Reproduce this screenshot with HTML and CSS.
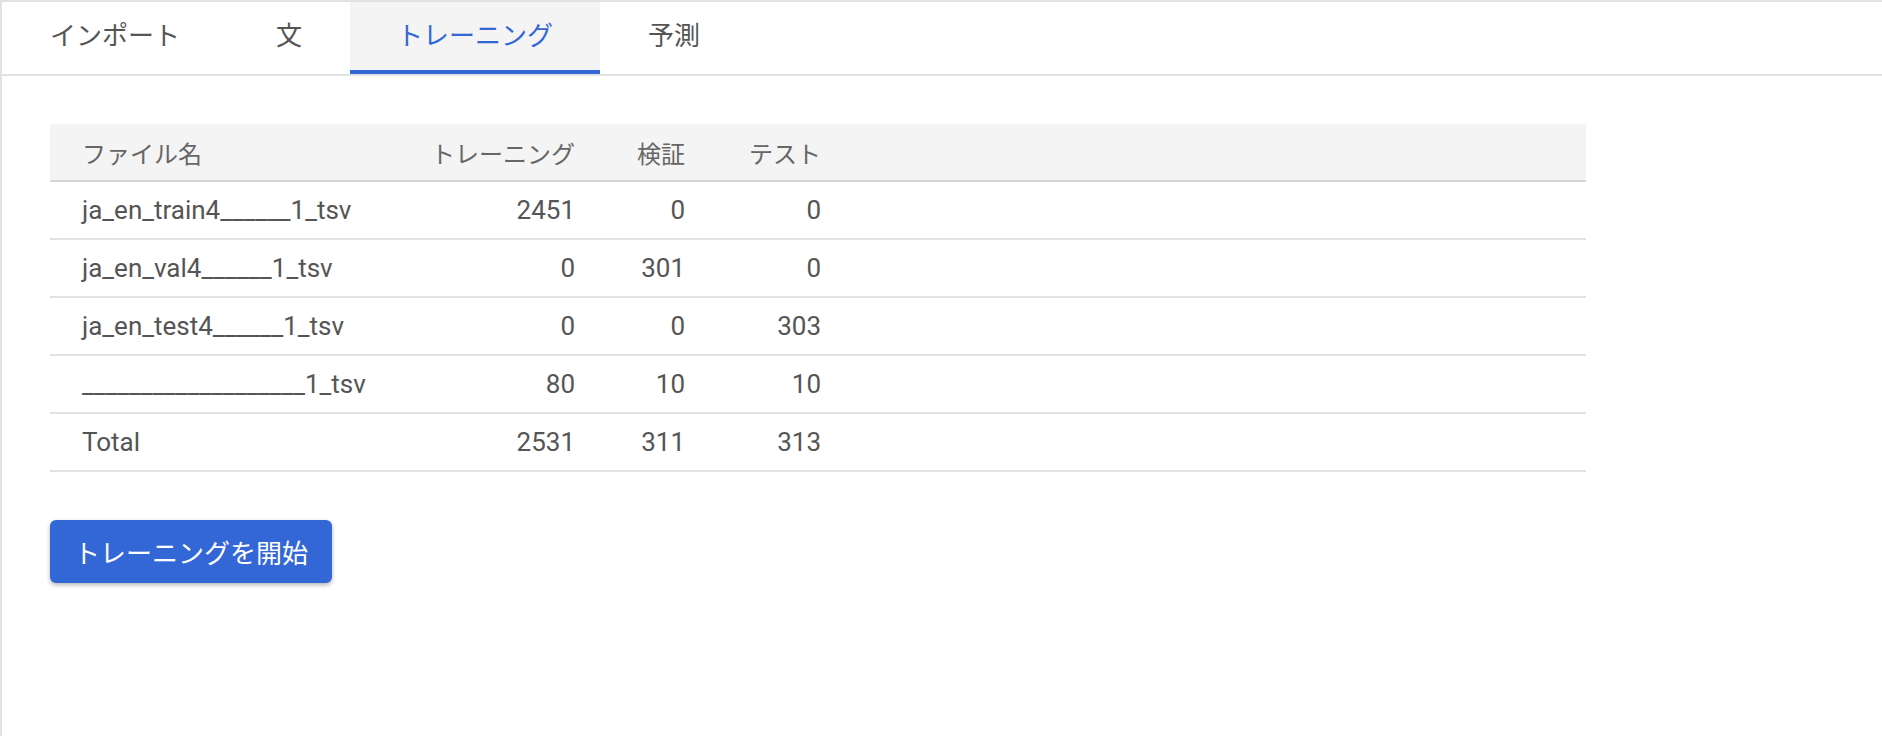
FILE: index.html
```html
<!DOCTYPE html>
<html lang="ja">
<head>
  <meta charset="utf-8"/>
  <meta content="width=device-width, initial-scale=1.0" name="viewport"/>
  <title>トレーニング</title>
  <link rel="stylesheet" href="styles.css">
</head>
<body>

<div class="app">
  <nav class="tabs">
    <a class="tab" href="#">インポート</a>
    <a class="tab" href="#">文</a>
    <a class="tab active" href="#">トレーニング</a>
    <a class="tab" href="#">予測</a>
  </nav>

  <main class="content">
    <table class="files">
      <colgroup>
        <col class="col-name">
        <col class="col-train">
        <col class="col-val">
        <col class="col-test">
        <col>
      </colgroup>
      <thead>
        <tr>
          <th class="name">ファイル名</th>
          <th class="num">トレーニング</th>
          <th class="num">検証</th>
          <th class="num">テスト</th>
          <th></th>
        </tr>
      </thead>
      <tbody>
        <tr>
          <td class="name">ja_en_train4______1_tsv</td>
          <td class="num">2451</td>
          <td class="num">0</td>
          <td class="num">0</td>
          <td></td>
        </tr>
        <tr>
          <td class="name">ja_en_val4______1_tsv</td>
          <td class="num">0</td>
          <td class="num">301</td>
          <td class="num">0</td>
          <td></td>
        </tr>
        <tr>
          <td class="name">ja_en_test4______1_tsv</td>
          <td class="num">0</td>
          <td class="num">0</td>
          <td class="num">303</td>
          <td></td>
        </tr>
        <tr>
          <td class="name">___________________1_tsv</td>
          <td class="num">80</td>
          <td class="num">10</td>
          <td class="num">10</td>
          <td></td>
        </tr>
        <tr>
          <td class="name">Total</td>
          <td class="num">2531</td>
          <td class="num">311</td>
          <td class="num">313</td>
          <td></td>
        </tr>
      </tbody>
    </table>

    <button class="start-btn">トレーニングを開始</button>
  </main>
</div>

</body>
</html>
```

FILE: styles.css
```css
body {
  margin: 0;
  background: #fff;
  color: #555;
  font-family: Roboto, "Noto Sans CJK JP", sans-serif;
}

.app {
  min-height: 100vh;
  box-sizing: border-box;
  border-top: 2px solid #e2e2e2;
  border-left: 2px solid #e2e2e2;
}

/* tab bar */
.tabs {
  display: flex;
  border-bottom: 2px solid #e2e2e2;
}

.tab {
  display: block;
  height: 68px;
  line-height: 68px;
  padding: 0 48px;
  font-size: 26px;
  color: #555;
  text-decoration: none;
  border-bottom: 4px solid transparent;
}

.tab.active {
  padding: 0 47px;
  background: #f4f4f4;
  color: #3367d6;
  border-bottom-color: #3367d6;
}

/* table */
.content {
  padding: 48px;
}

.files {
  width: 1536px;
  border-collapse: collapse;
  table-layout: fixed;
}

.col-name { width: 370px; }
.col-train { width: 155px; }
.col-val { width: 110px; }
.col-test { width: 136px; }

.files th {
  height: 54px;
  background: #f4f4f4;
  color: #666;
  font-size: 24px;
  font-weight: normal;
  white-space: nowrap;
  border-bottom: 2px solid #d6d6d6;
}

.files td {
  height: 54px;
  font-size: 26px;
  border-bottom: 2px solid #e2e2e2;
  white-space: nowrap;
}

.files .name {
  text-align: left;
  padding: 0 0 0 32px;
}

.files .num {
  text-align: right;
  padding: 0;
}

/* button */
.start-btn {
  margin-top: 48px;
  height: 63px;
  padding: 0 24px;
  border: none;
  border-radius: 6px;
  background: #3367d6;
  color: #fff;
  font-family: inherit;
  font-size: 26px;
  cursor: pointer;
  box-shadow: 0 2px 4px rgba(0, 0, 0, 0.3);
}
```
